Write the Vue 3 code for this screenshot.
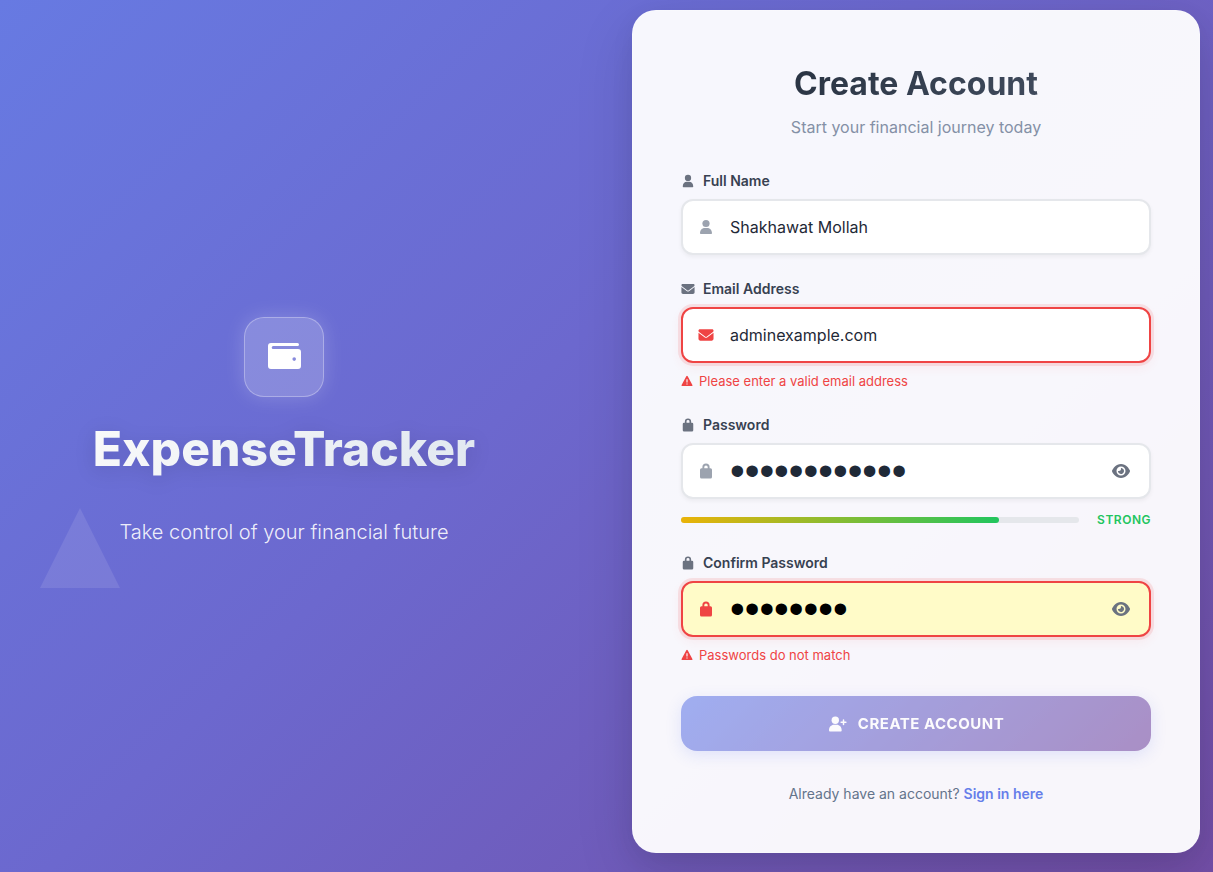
<script setup>
import { ref } from 'vue'

const fullName = ref('Shakhawat Mollah')
const email = ref('adminexample.com')
const password = ref('Secret#12345')
const confirmation = ref('Secret#1')
const passwordVisible = ref(false)
const confirmationVisible = ref(false)
const eyePath =
  'M288 32c-80.8 0-145.5 36.8-192.6 80.6C48.6 156 17.3 208 2.5 243.7c-3.3 7.9-3.3 16.7 0 24.6C17.3 304 48.6 356 95.4 399.4C142.5 443.2 207.2 480 288 480s145.5-36.8 192.6-80.6c46.8-43.5 78.1-95.4 93-131.1c3.3-7.9 3.3-16.7 0-24.6c-14.9-35.7-46.2-87.7-93-131.1C433.5 68.8 368.8 32 288 32zM144 256a144 144 0 1 1 288 0 144 144 0 1 1 -288 0zm144-64c0 35.3-28.7 64-64 64c-7.1 0-13.9-1.2-20.3-3.3c-5.5-1.8-11.9 1.6-11.7 7.4c.3 6.9 1.3 13.8 3.2 20.7c13.7 51.2 66.4 81.6 117.6 67.9s81.6-66.4 67.9-117.6c-11.1-41.5-47.8-69.4-88.6-71.1c-5.8-.2-9.2 6.1-7.4 11.7c2.1 6.4 3.3 13.2 3.3 20.3z'
</script>

<template>
  <div class="page">
    <svg width="0" height="0" class="sprite" aria-hidden="true">
      <symbol id="i-user" viewBox="0 0 14 16">
        <circle cx="7" cy="4.5" r="3.6" />
        <path d="M1 14.300C1 11 3 8.900 5.700 8.900h2.600C11 8.900 13 11 13 14.300a.8.8 0 0 1-.8.8H1.800a.8.8 0 0 1-.8-.8z" />
      </symbol>
      <symbol id="i-mail" viewBox="-16 0 544 512">
        <path d="M48 64C21.5 64 0 85.5 0 112c0 15.1 7.1 29.3 19.2 38.4L236.8 313.6c11.4 8.5 27 8.5 38.4 0L492.8 150.4c12.1-9.1 19.2-23.3 19.2-38.4c0-26.5-21.5-48-48-48H48zM0 176V384c0 35.3 28.7 64 64 64H448c35.3 0 64-28.7 64-64V176L294.4 339.2c-22.8 17.1-54 17.1-76.8 0L0 176z" />
      </symbol>
      <symbol id="i-lock" viewBox="0 0 14 16">
        <path d="M2.500 5.300h.9V4.100a3.600 3.600 0 0 1 7.200 0v1.200h.9A1.500 1.500 0 0 1 13 6.800v7.100a1.500 1.500 0 0 1-1.500 1.500h-9A1.500 1.500 0 0 1 1 13.900V6.800a1.500 1.500 0 0 1 1.500-1.500zM5.300 5.300h3.400V4.100a1.700 1.700 0 0 0-3.400 0z" fill-rule="evenodd" />
      </symbol>
      <symbol id="i-warn" viewBox="0 0 12 12">
        <path d="M5.300 1.200a.8.8 0 0 1 1.400 0l4.700 8.900a.6.6 0 0 1-.5.900H1.100a.6.6 0 0 1-.5-.900zM5.400 4.200v3.300h1.200V4.200zM5.400 8.400v1.200h1.200V8.400z" fill-rule="evenodd" />
      </symbol>
    </svg>

    <span class="triangle" aria-hidden="true"></span>

    <main class="layout">
      <section class="brand">
        <div class="brand-icon">
          <svg width="34" height="28" viewBox="-0.5 1 34 28" aria-hidden="true">
            <path fill-rule="evenodd" d="M3.500 1H30a1.500 1.500 0 0 1 0 3H5.700a1.500 1.500 0 0 0 0 3H30.500A3 3 0 0 1 33.500 10V24a3 3 0 0 1-3 3H3.500a3 3 0 0 1-3-3V4a3 3 0 0 1 3-3zM26.700 15.300a1.800 1.800 0 1 0 0 3.600 1.800 1.800 0 0 0 0-3.600z" />
          </svg>
        </div>
        <h1>ExpenseTracker</h1>
        <p>Take control of your financial future</p>
      </section>

      <section class="card">
        <header>
          <h2>Create Account</h2>
          <p>Start your financial journey today</p>
        </header>

        <form novalidate @submit.prevent>
          <div class="field">
            <label for="name"><svg><use href="#i-user" /></svg>Full Name</label>
            <div class="control">
              <svg><use href="#i-user" /></svg>
              <input id="name" v-model="fullName" type="text" />
            </div>
          </div>

          <div class="field invalid">
            <label for="email"><svg><use href="#i-mail" /></svg>Email Address</label>
            <div class="control">
              <svg><use href="#i-mail" /></svg>
              <input id="email" v-model="email" type="email" aria-describedby="email-error" />
            </div>
            <p id="email-error" class="error"><svg><use href="#i-warn" /></svg>Please enter a valid email address</p>
          </div>

          <div class="field">
            <label for="password"><svg><use href="#i-lock" /></svg>Password</label>
            <div class="control">
              <svg><use href="#i-lock" /></svg>
              <input id="password" v-model="password" :type="passwordVisible ? 'text' : 'password'" />
              <button type="button" class="reveal" aria-label="Show password" @click="passwordVisible = !passwordVisible">
                <svg viewBox="0 32 576 448"><path :d="eyePath" /></svg>
              </button>
            </div>
            <div class="strength">
              <div class="track"><div class="fill"></div></div>
              <span>STRONG</span>
            </div>
          </div>

          <div class="field invalid autofilled">
            <label for="confirm"><svg><use href="#i-lock" /></svg>Confirm Password</label>
            <div class="control">
              <svg><use href="#i-lock" /></svg>
              <input id="confirm" v-model="confirmation" :type="confirmationVisible ? 'text' : 'password'" aria-describedby="confirm-error" />
              <button type="button" class="reveal" aria-label="Show password" @click="confirmationVisible = !confirmationVisible">
                <svg viewBox="0 32 576 448"><path :d="eyePath" /></svg>
              </button>
            </div>
            <p id="confirm-error" class="error"><svg><use href="#i-warn" /></svg>Passwords do not match</p>
          </div>

          <button type="submit" class="submit">
            <svg width="20" height="16" viewBox="0 0 20 16" aria-hidden="true">
              <circle cx="7.300" cy="4.300" r="3.700" />
              <path d="M1 14.500C1 11 3.200 8.800 6 8.800h2.700c2.800 0 5 2.200 5 5.700a.9.9 0 0 1-.9.900H1.900a.9.9 0 0 1-.9-.900z" />
              <path d="M15.500 3.900v4.700M13.100 6.250h4.800" fill="none" stroke="currentColor" stroke-width="1.500" stroke-linecap="round" />
            </svg>
            CREATE ACCOUNT
          </button>
        </form>

        <footer>Already have an account? <a href="#signin">Sign in here</a></footer>
      </section>
    </main>
  </div>
</template>

<style>
body {
  margin: 0;
}
</style>

<style scoped>
* {
  box-sizing: border-box;
}
h1, h2, p {
  margin: 0;
}
svg {
  fill: currentColor;
  flex: none;
}
.page {
  position: relative;
  min-height: 100vh;
  display: grid;
  background: linear-gradient(135deg, #677ae2 0%, #6c68ce 44%, #724ea6 100%);
  font-family: Inter, "Liberation Sans", sans-serif;
  overflow: hidden;
}
.sprite {
  position: absolute;
}
.triangle {
  position: absolute;
  left: 40px;
  top: 508px;
  width: 80px;
  height: 80px;
  background: rgba(255, 255, 255, 0.1);
  clip-path: polygon(50% 0, 100% 100%, 0 100%);
}
.layout {
  position: relative;
  display: grid;
  grid-template-columns: minmax(0, 1fr) minmax(0, 1fr);
  gap: 64px;
  align-items: center;
  padding: 10px 13px 19px 0;
}
.brand {
  display: flex;
  flex-direction: column;
  align-items: center;
  text-align: center;
  color: #fff;
}
.brand-icon {
  display: grid;
  place-items: center;
  width: 80px;
  height: 80px;
  margin-bottom: 16px;
  border: 1px solid rgba(255, 255, 255, 0.3);
  border-radius: 20px;
  background: rgba(255, 255, 255, 0.2);
  box-shadow: 0 0 20px rgba(255, 255, 255, 0.2);
}
.brand h1 {
  margin-bottom: 32px;
  font-size: 48px;
  line-height: 72px;
  font-weight: 800;
  background: linear-gradient(135deg, #fafafa, #f0f3f6 40%, #e0e7f0);
  background-clip: text;
  color: transparent;
  filter: drop-shadow(0 4px 10px rgba(0, 0, 0, 0.12));
}
.brand p {
  font-size: 20px;
  line-height: 30px;
  font-weight: 300;
  color: rgba(255, 255, 255, 0.9);
}
.card {
  padding: 48px;
  border: 1px solid rgba(255, 255, 255, 0.2);
  border-radius: 24px;
  background: rgba(255, 255, 255, 0.95);
  box-shadow: 0 20px 60px rgba(0, 0, 0, 0.12), 0 8px 24px rgba(0, 0, 0, 0.06);
}
header {
  margin-bottom: 32px;
  text-align: center;
}
h2 {
  margin-bottom: 6px;
  font-size: 32px;
  line-height: 50px;
  font-weight: 700;
  background: linear-gradient(135deg, #1f2937, #4a5568);
  background-clip: text;
  color: transparent;
}
header p {
  font-size: 16px;
  line-height: 24px;
  color: #8490a6;
}
.field {
  margin-bottom: 24px;
}
label {
  display: flex;
  align-items: center;
  gap: 8px;
  margin-bottom: 8px;
  font-size: 14px;
  line-height: 20px;
  font-weight: 600;
  color: #374151;
}
label svg {
  width: 14px;
  height: 14px;
  color: #6b7280;
}
.control {
  display: flex;
  align-items: center;
  gap: 16px;
  height: 56px;
  padding: 0 18px 0 15px;
  border: 2px solid #e5e7eb;
  border-radius: 12px;
  background: #fff;
  box-shadow: 0 2px 4px rgba(0, 0, 0, 0.05);
}
.control > svg {
  width: 16px;
  height: 16px;
  color: #9ca3af;
}
input {
  flex: 1;
  min-width: 0;
  height: 100%;
  padding: 0;
  border: 0;
  outline: 0;
  background: transparent;
  font-family: inherit;
  font-size: 16px;
  color: #1f2937;
}
input[type="password"] {
  font-family: "Liberation Sans", sans-serif;
  font-size: 42px;
}
.invalid .control {
  border-color: #ef4444;
  box-shadow: 0 0 0 3px rgba(239, 68, 68, 0.12), 0 4px 12px rgba(239, 68, 68, 0.08);
}
.invalid .control > svg {
  color: #ef4444;
}
.autofilled .control {
  background: #fffbc8;
}
.autofilled input {
  color: #000;
}
.reveal {
  display: grid;
  place-items: center;
  width: 20px;
  height: 32px;
  padding: 0;
  border: 0;
  background: none;
  color: #6b7280;
}
.reveal svg {
  width: 18px;
  height: 14px;
}
.error {
  display: flex;
  align-items: center;
  gap: 6px;
  margin-top: 8px;
  font-size: 13px;
  line-height: 20px;
  color: #ef4444;
}
.error svg {
  width: 12px;
  height: 12px;
}
.strength {
  display: flex;
  align-items: center;
  gap: 18px;
  margin-top: 12px;
}
.strength span {
  font-size: 12px;
  line-height: 18px;
  font-weight: 600;
  letter-spacing: 0.5px;
  color: #22c55e;
}
.track {
  flex: 1;
  height: 6px;
  border-radius: 3px;
  background: #e5e7eb;
}
.fill {
  width: 80%;
  height: 6px;
  border-radius: 3px;
  background: linear-gradient(90deg, #eab308, #22c55e);
}
.submit {
  display: flex;
  align-items: center;
  justify-content: center;
  gap: 10px;
  width: 100%;
  height: 55px;
  margin-top: 31px;
  border: 0;
  border-radius: 16px;
  background: linear-gradient(135deg, #667eea, #764ba2);
  box-shadow: 0 4px 16px rgba(102, 126, 234, 0.3);
  opacity: 0.6;
  color: #fff;
  font-family: inherit;
  font-size: 15px;
  font-weight: 700;
  letter-spacing: 0.5px;
}
footer {
  margin-top: 32px;
  text-align: center;
  font-size: 14px;
  line-height: 21px;
  color: #64748b;
}
footer a {
  color: #667eea;
  font-weight: 600;
  text-decoration: none;
}
</style>
